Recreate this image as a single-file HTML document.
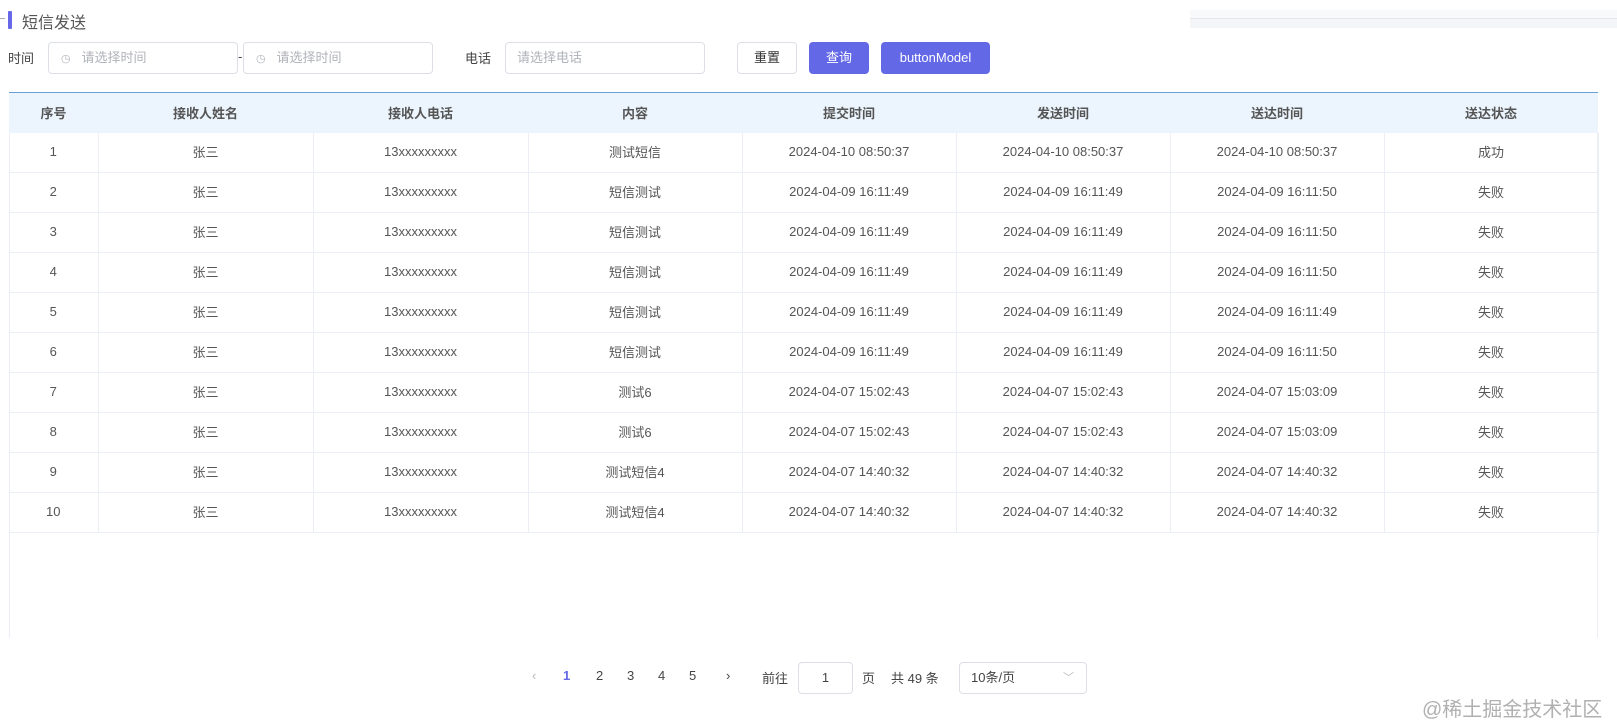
<!DOCTYPE html>
<html><head><meta charset="utf-8"><style>
*{box-sizing:border-box;margin:0;padding:0}
body{width:1617px;height:725px;background:#fff;font-family:"Liberation Sans","Noto Sans CJK SC",sans-serif;font-size:13px;color:#606266;position:relative;overflow:hidden}
.abs{position:absolute}
.inp{position:absolute;top:42px;height:32px;border:1px solid #dcdfe6;border-radius:4px;color:#b0b3b9;font-size:13px;line-height:30px}
.btn{position:absolute;top:42px;height:32px;border-radius:4px;font-size:13px;line-height:32px;text-align:center}
table{position:absolute;left:9px;top:92px;border-collapse:collapse;table-layout:fixed;width:1589px}
th{height:40px;background:#ecf5fd;color:#555;font-weight:bold;font-size:13px;border-top:1px solid #6a9fd8}
td{height:40px;text-align:center;border-bottom:1px solid #ebeef5;border-right:1px solid #ebeef5;color:#555;font-size:13px;padding-bottom:2px}
.pg{position:absolute;top:668px;font-size:13px;color:#444}
</style></head><body>
<div class="abs" style="left:1190px;top:10px;width:427px;height:8px;background:#f8f9fb"></div>
<div class="abs" style="left:1190px;top:18px;width:427px;height:10px;background:#f4f5f7;border-top:1px solid #e4e6ea"></div>
<div class="abs" style="left:0;top:18px;width:5px;height:1px;background:#aaa"></div>
<div class="abs" style="left:8px;top:11px;width:4px;height:18px;background:#6668e8;border-radius:1px"></div>
<div class="abs" style="left:22px;top:9px;font-size:16px;color:#555">短信发送</div>
<div class="abs" style="left:8px;top:48px;color:#444">时间</div>
<div class="inp" style="left:48px;width:190px;padding-left:12px"><span style="font-size:11px">◷</span>&nbsp;&nbsp;&nbsp;请选择时间</div>
<div class="abs" style="left:238px;top:49px;color:#444">-</div>
<div class="inp" style="left:243px;width:190px;padding-left:12px"><span style="font-size:11px">◷</span>&nbsp;&nbsp;&nbsp;请选择时间</div>
<div class="abs" style="left:465px;top:48px;color:#444">电话</div>
<div class="inp" style="left:505px;width:200px;padding-left:11px">请选择电话</div>
<div class="btn" style="left:737px;width:60px;border:1px solid #dcdfe6;color:#333;line-height:30px">重置</div>
<div class="btn" style="left:809px;width:60px;background:#6368e6;color:#fff">查询</div>
<div class="btn" style="left:881px;width:109px;background:#6368e6;color:#fff">buttonModel</div>
<div class="abs" style="left:9px;top:132px;width:1px;height:506px;background:#ebeef5"></div>
<div class="abs" style="left:1597px;top:92px;width:1px;height:546px;background:#ebeef5"></div>
<table>
<colgroup><col style="width:89px"><col style="width:215px"><col style="width:215px"><col style="width:214px"><col style="width:214px"><col style="width:214px"><col style="width:214px"><col style="width:214px"></colgroup>
<tr><th>序号</th><th>接收人姓名</th><th>接收人电话</th><th>内容</th><th>提交时间</th><th>发送时间</th><th>送达时间</th><th>送达状态</th></tr>
<tr><td>1</td><td>张三</td><td>13xxxxxxxxx</td><td>测试短信</td><td>2024-04-10 08:50:37</td><td>2024-04-10 08:50:37</td><td>2024-04-10 08:50:37</td><td>成功</td></tr>
<tr><td>2</td><td>张三</td><td>13xxxxxxxxx</td><td>短信测试</td><td>2024-04-09 16:11:49</td><td>2024-04-09 16:11:49</td><td>2024-04-09 16:11:50</td><td>失败</td></tr>
<tr><td>3</td><td>张三</td><td>13xxxxxxxxx</td><td>短信测试</td><td>2024-04-09 16:11:49</td><td>2024-04-09 16:11:49</td><td>2024-04-09 16:11:50</td><td>失败</td></tr>
<tr><td>4</td><td>张三</td><td>13xxxxxxxxx</td><td>短信测试</td><td>2024-04-09 16:11:49</td><td>2024-04-09 16:11:49</td><td>2024-04-09 16:11:50</td><td>失败</td></tr>
<tr><td>5</td><td>张三</td><td>13xxxxxxxxx</td><td>短信测试</td><td>2024-04-09 16:11:49</td><td>2024-04-09 16:11:49</td><td>2024-04-09 16:11:49</td><td>失败</td></tr>
<tr><td>6</td><td>张三</td><td>13xxxxxxxxx</td><td>短信测试</td><td>2024-04-09 16:11:49</td><td>2024-04-09 16:11:49</td><td>2024-04-09 16:11:50</td><td>失败</td></tr>
<tr><td>7</td><td>张三</td><td>13xxxxxxxxx</td><td>测试6</td><td>2024-04-07 15:02:43</td><td>2024-04-07 15:02:43</td><td>2024-04-07 15:03:09</td><td>失败</td></tr>
<tr><td>8</td><td>张三</td><td>13xxxxxxxxx</td><td>测试6</td><td>2024-04-07 15:02:43</td><td>2024-04-07 15:02:43</td><td>2024-04-07 15:03:09</td><td>失败</td></tr>
<tr><td>9</td><td>张三</td><td>13xxxxxxxxx</td><td>测试短信4</td><td>2024-04-07 14:40:32</td><td>2024-04-07 14:40:32</td><td>2024-04-07 14:40:32</td><td>失败</td></tr>
<tr><td>10</td><td>张三</td><td>13xxxxxxxxx</td><td>测试短信4</td><td>2024-04-07 14:40:32</td><td>2024-04-07 14:40:32</td><td>2024-04-07 14:40:32</td><td>失败</td></tr>
</table>
<div class="pg" style="left:532px;color:#bbb">‹</div>
<div class="pg" style="left:563px;color:#6368e6;font-weight:bold">1</div>
<div class="pg" style="left:596px">2</div>
<div class="pg" style="left:627px">3</div>
<div class="pg" style="left:658px">4</div>
<div class="pg" style="left:689px">5</div>
<div class="pg" style="left:726px">›</div>
<div class="pg" style="left:762px">前往</div>
<div class="abs" style="left:798px;top:662px;width:55px;height:32px;border:1px solid #dcdfe6;border-radius:4px;text-align:center;line-height:30px;color:#444">1</div>
<div class="pg" style="left:862px">页</div>
<div class="pg" style="left:891px">共 49 条</div>
<div class="abs" style="left:959px;top:662px;width:128px;height:32px;border:1px solid #dcdfe6;border-radius:4px;line-height:30px;padding-left:11px;color:#444">10条/页<span style="position:absolute;right:12px;color:#bbb;font-size:11px">﹀</span></div>
<div class="abs" style="left:1422px;top:693px;font-size:20px;color:#b0b0b0">@稀土掘金技术社区</div>
</body></html>
